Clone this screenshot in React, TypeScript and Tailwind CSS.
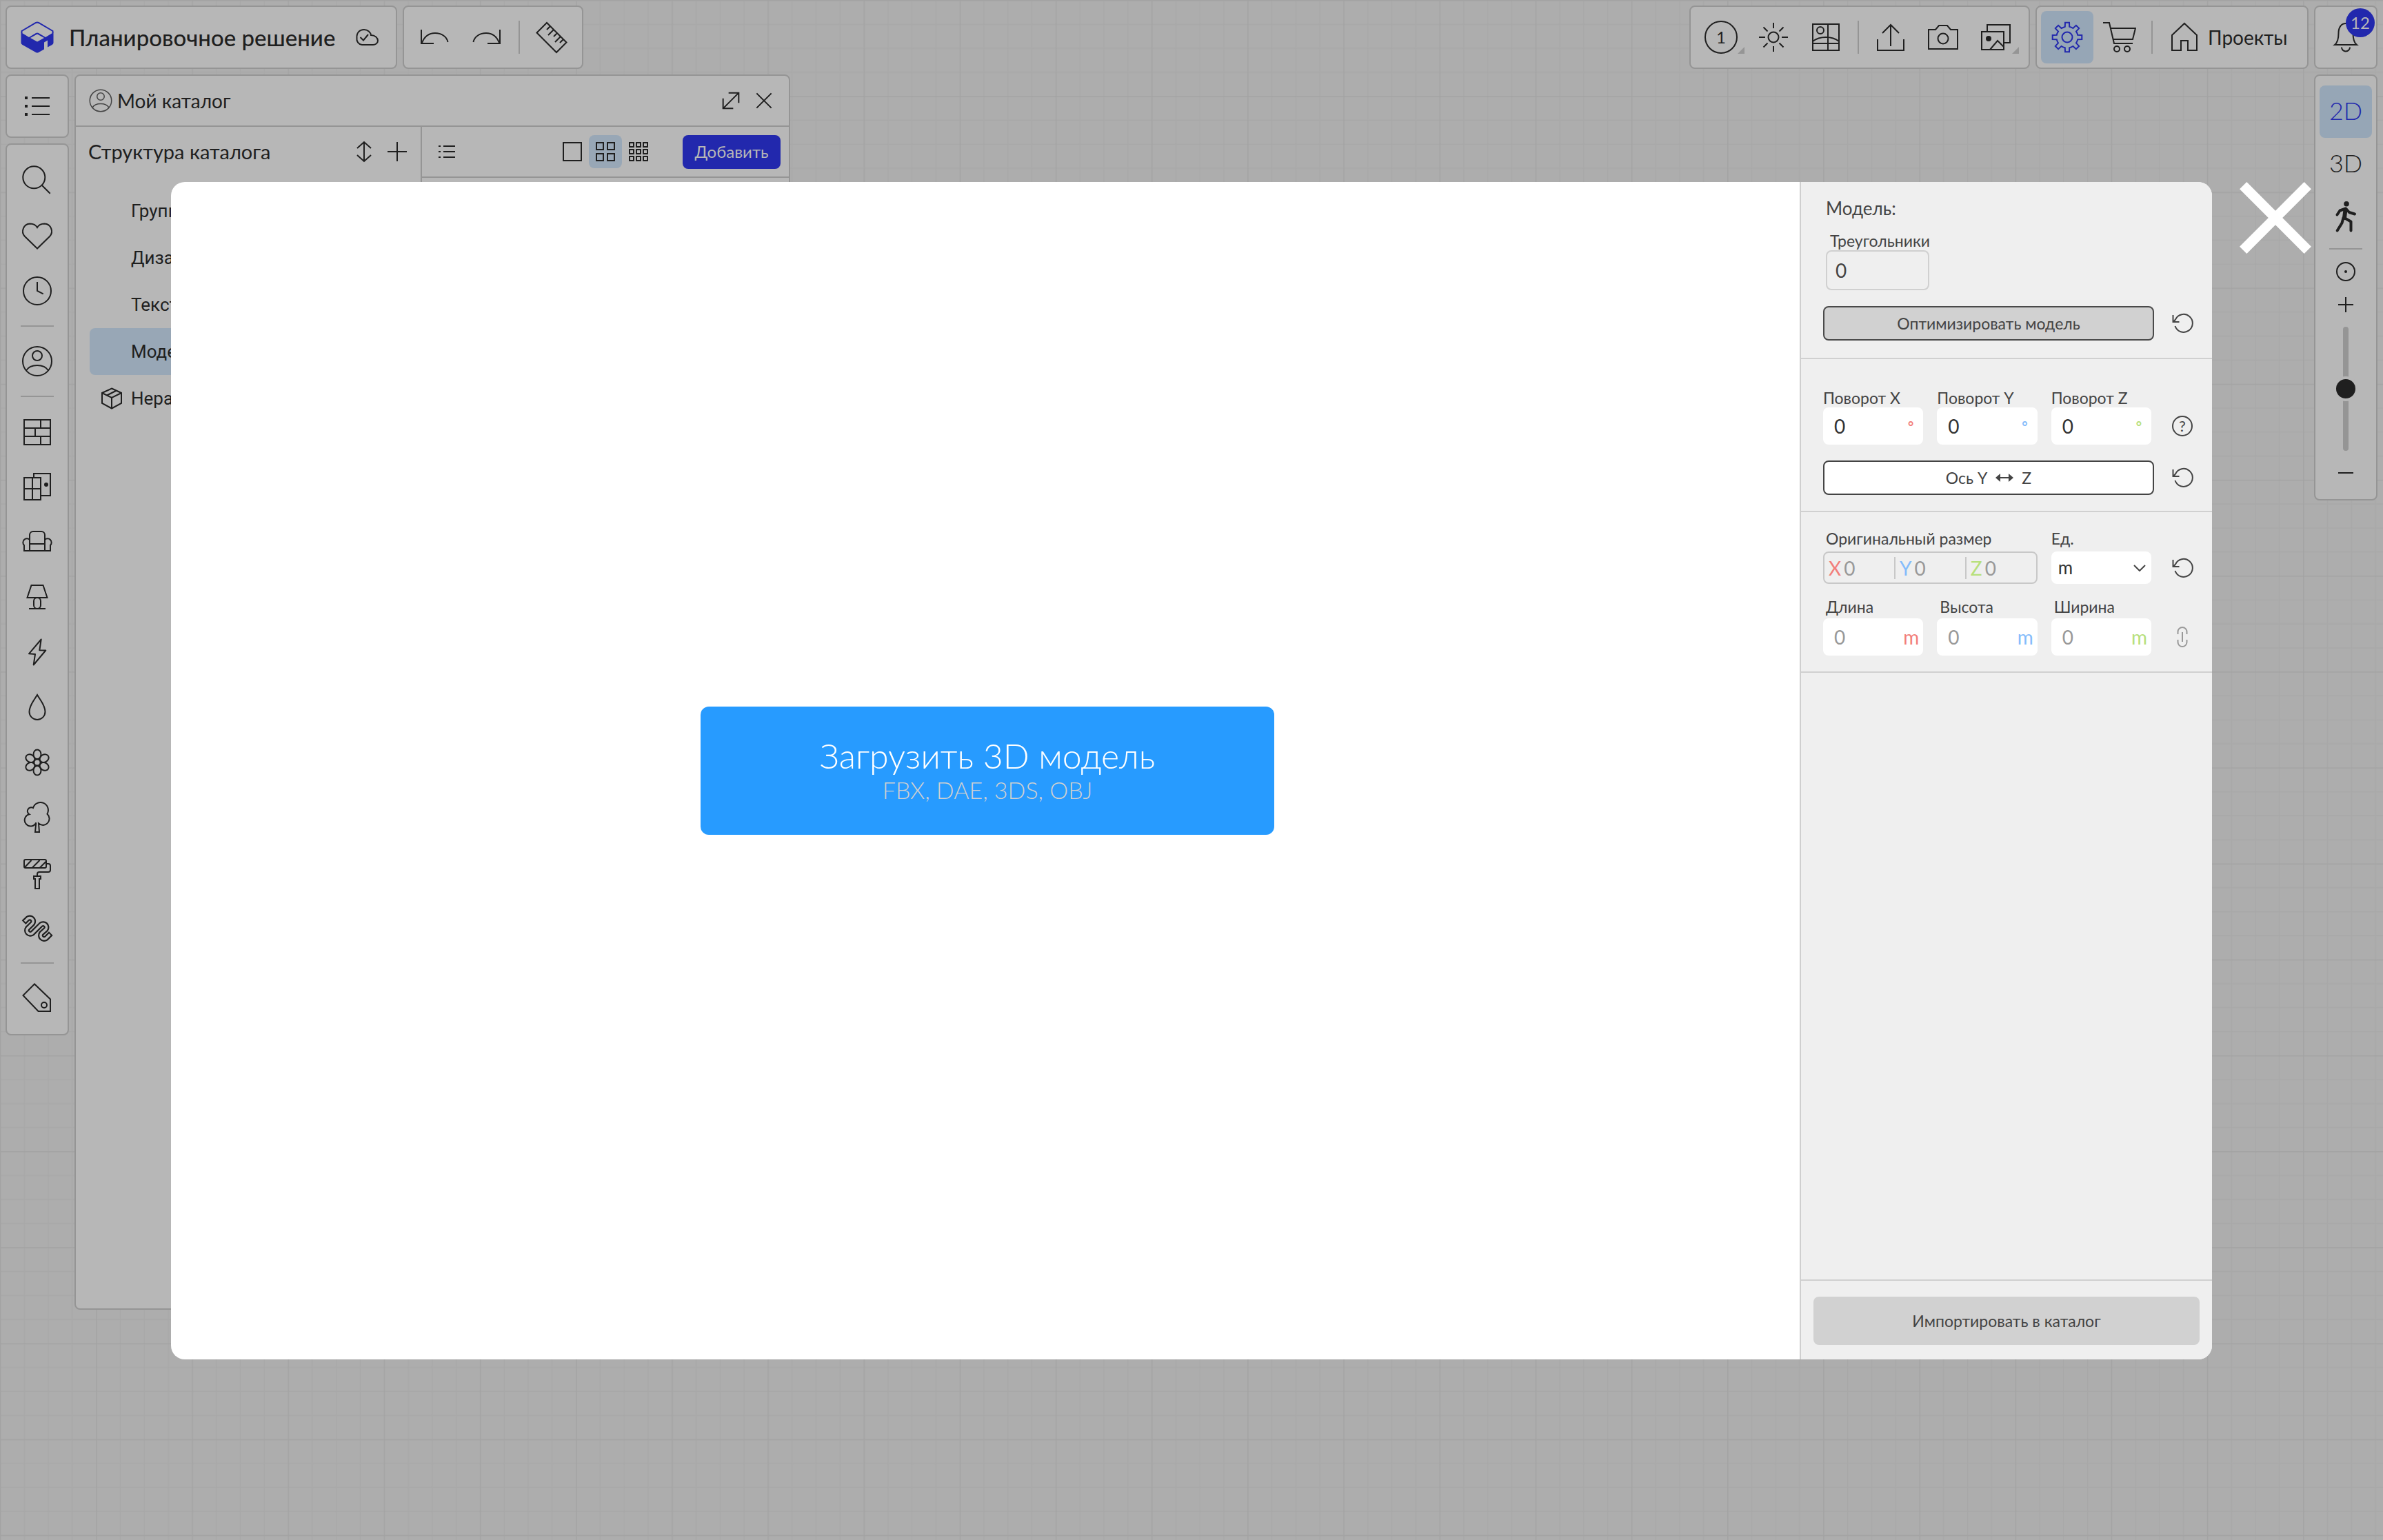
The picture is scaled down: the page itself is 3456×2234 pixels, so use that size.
import type { ReactNode } from 'react';
import clsx from 'clsx';

type IconProps = { children: ReactNode; className?: string };

function Icon({ children, className = 'size-12' }: IconProps) {
  return (
    <svg viewBox="0 0 48 48" fill="none" stroke="currentColor" strokeWidth="2" className={clsx('shrink-0', className)} aria-hidden="true">
      {children}
    </svg>
  );
}

const gearPath =
  Array.from({ length: 8 }, (_, k) => {
    const point = (radius: number, offset: number) => {
      const a = ((k * 45 + offset) * Math.PI) / 180;
      return `${(24 + radius * Math.sin(a)).toFixed(1)} ${(24 - radius * Math.cos(a)).toFixed(1)}`;
    };
    return [point(15.5, -12), point(21.5, -8), point(21.5, 8), point(15.5, 12)].join('L');
  })
    .map((tooth, i) => (i === 0 ? `M${tooth}` : `A15.5 15.5 0 0 1 ${tooth}`))
    .join('') + 'Z';

const userIcon = (
  <>
    <circle cx="24" cy="24" r="21" />
    <circle cx="24" cy="16" r="7" />
    <path d="M8 37.5C11 32.5 17 30 24 30s13 2.500 16 7.500" />
  </>
);

const listIcon = (
  <>
    <path d="M16 12H42M16 24H42M16 36H42" />
    <path d="M6 12H10M6 24H10M6 36H10" strokeWidth="4" />
  </>
);

const hosePath =
  'L10.200 10.500A5 5 0 0 1 17.200 17.500L10 24.700A5 5 0 0 0 17 31.700L29.500 19.200A5 5 0 0 1 36.500 26.200L30 32A5 5 0 0 0 37 39';

type Tool = { label: string; icon: ReactNode };

const toolGroups: Tool[][] = [
  [
    {
      label: 'Поиск',
      icon: (
        <>
          <circle cx="19.300" cy="19.300" r="16" />
          <path d="M31 31L42.700 42.700" />
        </>
      ),
    },
    {
      label: 'Избранное',
      icon: (
        <path d="M24 42.500L6 25A11 11 0 0 1 13.500 6.500C18 6.500 22 8.500 24 12C26 8.500 30 6.500 34.500 6.500A11 11 0 0 1 42 25Z" />
      ),
    },
    {
      label: 'История',
      icon: (
        <>
          <circle cx="24" cy="24" r="20" />
          <path d="M24 11V24L32.700 28.300" />
        </>
      ),
    },
  ],
  [{ label: 'Мой каталог', icon: userIcon }],
  [
    { label: 'Стены', icon: <path d="M5 7H43V43H5ZM5 19H43M5 31H43M29 7V19M21 19V31M29 31V43" /> },
    {
      label: 'Окна и двери',
      icon: (
        <>
          <path d="M5 11H29V43H5ZM17 11V43M5 27H29M19 11V5H43V37H29" />
          <circle cx="37" cy="21" r="3" fill="currentColor" stroke="none" />
        </>
      ),
    },
    {
      label: 'Мебель',
      icon: (
        <path d="M5 37H43M13 37V14a5 5 0 0 1 5-5h12a5 5 0 0 1 5 5v23M13 27H35M5 38V29A5.500 5.500 0 1 1 13 21M43 38V29A5.500 5.500 0 1 0 35 21" />
      ),
    },
    {
      label: 'Освещение',
      icon: (
        <>
          <path d="M15.500 7H32.500L38.500 25H9.500ZM12 41H36" />
          <rect x="19" y="25" width="10" height="16" rx="5" />
        </>
      ),
    },
    {
      label: 'Электрика',
      icon: <path d="M29.700 5.500L12 26.300L21 27L18.700 42.500L36.300 21.500L27.300 21.300Z" strokeLinejoin="round" />,
    },
    {
      label: 'Сантехника',
      icon: <path d="M24 6C20 13 12.500 21 12.500 30.500a11.500 11.500 0 0 0 23 0C35.500 21 28 13 24 6Z" />,
    },
    {
      label: 'Декор',
      icon: (
        <>
          {[0, 60, 120, 180, 240, 300].map((angle) => (
            <ellipse key={angle} cx="24" cy="12.300" rx="5.500" ry="6.800" transform={`rotate(${angle} 24 24)`} />
          ))}
          <circle cx="24" cy="24" r="4.600" />
        </>
      ),
    },
    {
      label: 'Растения',
      icon: (
        <path d="M21 45L22.300 31.500A8.700 8.700 0 1 1 12.500 19.300A5.300 5.300 0 1 1 18 10A11.200 11.200 0 1 1 38.500 18.700A8.800 8.800 0 1 1 26 32.500L27 45Z" />
      ),
    },
    {
      label: 'Отделка',
      icon: (
        <>
          <rect x="5" y="5" width="32" height="12" rx="2" />
          <path d="M6 16L15.500 6M16.500 17L27.500 6M27.500 17L37 7.500M37 11h3a3 3 0 0 1 3 3v6a3 3 0 0 1-3 3H27a3 3 0 0 0-3 3v3M19 29H29V33H27V47H21V33H19Z" />
        </>
      ),
    },
    {
      label: 'Трубы',
      icon: (
        <>
          <path d={`M4.500 16.200${hosePath}L43.800 32.200`} strokeWidth="8" />
          <path d={`M5.900 14.800${hosePath}L42.400 33.600`} strokeWidth="3.600" className="stroke-[#b7b7b7]" />
        </>
      ),
    },
  ],
  [
    {
      label: 'Метки',
      icon: (
        <>
          <path d="M20 3.500L3.500 20L25.500 43H43V25.500Z" />
          <circle cx="34" cy="34" r="4" />
        </>
      ),
    },
  ],
];

const catalogItems = [
  { title: 'Группы' },
  { title: 'Дизайн' },
  { title: 'Текстуры' },
  { title: 'Модели', selected: true },
  { title: 'Неразобранное', box: true },
];

const axes = [
  { axis: 'X', size: 'Длина', color: 'text-[#f27f7b]' },
  { axis: 'Y', size: 'Высота', color: 'text-[#85bcfb]' },
  { axis: 'Z', size: 'Ширина', color: 'text-[#b7e07c]' },
];

function Panel({ children, className }: { children: ReactNode; className?: string }) {
  return <div className={clsx('rounded-lg border-2 border-[#959595] bg-[#b7b7b7]', className)}>{children}</div>;
}

function ToolButton({ label, active, more, children }: { label: string; active?: boolean; more?: boolean; children: ReactNode }) {
  return (
    <button
      type="button"
      aria-label={label}
      className={clsx('relative flex size-[76px] shrink-0 items-center justify-center rounded-lg', active && 'bg-[#96a6b6] text-[#2228ad]')}
    >
      <Icon>{children}</Icon>
      {more && (
        <svg viewBox="0 0 10 10" className="absolute right-1 bottom-3.5 size-2.5 fill-[#959595]" aria-hidden="true">
          <path d="M10 0V10H0Z" />
        </svg>
      )}
    </button>
  );
}

function VerticalDivider() {
  return <span className="mx-2 h-12 w-0.5 bg-[#959595]" />;
}

function ResetButton({ label }: { label: string }) {
  return (
    <button type="button" aria-label={label} className="flex w-8 items-center justify-center">
      <svg viewBox="0 0 32 32" fill="none" stroke="currentColor" strokeWidth="2" className="size-8" aria-hidden="true">
        <path d="M5.500 20A13 13 0 1 0 6 10.500L3 14M2.500 4V14H11.500" />
      </svg>
    </button>
  );
}

function CanvasGrid() {
  return (
    <svg className="absolute inset-0 h-full w-full" aria-hidden="true">
      <defs>
        <pattern id="grid" width="139.170" height="139.170" patternUnits="userSpaceOnUse">
          <path
            d="M35.300 0V139.200M70.100 0V139.200M104.900 0V139.200M0 35.300H139.200M0 70.100H139.200M0 104.900H139.200"
            stroke="#a8a8a8"
            strokeWidth="1.500"
          />
          <path d="M0.700 0V139.200M0 0.700H139.200" stroke="#a3a3a3" strokeWidth="1.500" />
        </pattern>
      </defs>
      <rect width="100%" height="100%" fill="url(#grid)" />
    </svg>
  );
}

function TopBar() {
  return (
    <header className="flex gap-2">
      <Panel className="flex h-[92px] w-[568px] items-center pr-[18px] pl-5">
        <svg viewBox="0 0 48 48" className="size-12 shrink-0" fill="#2228ad" aria-hidden="true">
          <path d="M1.500 18V15L22 3Q24 2 26 3L46.500 15V18" fill="none" stroke="#2228ad" strokeWidth="2" />
          <path d="M.5 17L12 24L22 18Q24 17 26 18L36 24L47.500 17V32Q47.500 34 45.500 35L39 38.500V28.500L34 31.500V41.500L26 46Q24 47 22 46L2.500 35Q.5 34 .5 32Z" />
          <path d="M14 25L24 30.500L34 25L24 19.500Z" fill="#b7b7b7" />
        </svg>
        <h1 className="ml-[22px] text-[33px] leading-10 font-medium whitespace-nowrap">Планировочное решение</h1>
        <button type="button" aria-label="Сохранено" className="ml-auto">
          <Icon>
            <path d="M17 35A8.500 8.500 0 0 1 9.500 25C9 18 13 13 20 13C25.500 13 29.500 17 30 21C36 21 40 25 40 29S36 35 33 35Z" />
            <path d="M14.500 24L19 28.500L26 20" />
          </Icon>
        </button>
      </Panel>
      <Panel className="flex h-[92px] items-center px-1.5">
        <ToolButton label="Отменить">
          <path d="M5 13V33H23M6 32C10 22 17 18 25 18C34 18 42 23 43.500 31" />
        </ToolButton>
        <ToolButton label="Повторить">
          <path d="M43 13V33H25M42 32C38 22 31 18 23 18C14 18 6 23 4.500 31" />
        </ToolButton>
        <VerticalDivider />
        <ToolButton label="Линейка">
          <path d="M17 3L2.500 17.500L31 46L45.500 31.500ZM22 8L17 13M27 13L19 21M32 18L27 23M37 23L29 31M41 27L36 32" />
        </ToolButton>
      </Panel>

      <Panel className="ml-auto flex h-[92px] items-center pr-2.5 pl-1.5">
        <button type="button" className="relative flex size-[76px] items-center justify-center">
          <span className="flex size-12 items-center justify-center rounded-full border-2 border-[#1f1f1f] text-[24px]">1</span>
          <svg viewBox="0 0 10 10" className="absolute right-1 bottom-3.5 size-2.5 fill-[#959595]" aria-hidden="true">
            <path d="M10 0V10H0Z" />
          </svg>
        </button>
        <ToolButton label="Свет">
          <circle cx="24" cy="24" r="7.500" />
          <path d="M24 3V11M24 37V45M3 24H12M36 24H45M9.500 9.500L15.500 15.500M32.500 32.500L38.500 38.500M38.500 9.500L32.500 15.500M15.500 32.500L9.500 38.500" />
        </ToolButton>
        <ToolButton label="Подложка">
          <path d="M5 5H43V43H5ZM27 5V43M5 33H43M5 30C10 26 17 24 24 24S38 26 43 30" />
          <circle cx="16" cy="14" r="5" />
        </ToolButton>
        <VerticalDivider />
        <ToolButton label="Экспорт">
          <path d="M5 27V43H43V27M24 6V37M12 18L24 6L36 18" />
        </ToolButton>
        <ToolButton label="Снимок">
          <path d="M3 13H13L18 7H30L35 13H45V41H3Z" />
          <circle cx="24" cy="26" r="7.500" />
        </ToolButton>
        <ToolButton label="Галерея" more>
          <path d="M4 16H36V42H4ZM12 16V6H45V32H37M16 42L27 29L36 38" />
          <circle cx="14" cy="26" r="4" fill="currentColor" stroke="none" />
        </ToolButton>
      </Panel>
      <Panel className="flex h-[92px] w-[396px] items-center pl-1.5">
        <ToolButton label="Настройки" active>
          <path d={gearPath} />
          <circle cx="24" cy="24" r="7.500" />
        </ToolButton>
        <ToolButton label="Корзина">
          <path d="M0 3H9L16 33H43M11 11H47L43 27H15" />
          <circle cx="20" cy="41" r="4" />
          <circle cx="35" cy="41" r="4" />
        </ToolButton>
        <VerticalDivider />
        <a href="#projects" className="flex h-[76px] items-center gap-2.5 pl-3.5 text-[28px]">
          <Icon>
            <path d="M24 4L42 21V43H29V29H19V43H6V21Z" />
          </Icon>
          Проекты
        </a>
      </Panel>
      <Panel className="relative flex h-[92px] w-[92px] items-center justify-center">
        <ToolButton label="Уведомления">
          <path d="M8 35C12 32 13.500 27 13.500 18C13.500 9 18 4 24 4s10.500 5 10.500 14c0 9 1.500 14 5.500 17ZM18 38.500a6 6 0 0 0 12 0" />
        </ToolButton>
        <span className="absolute top-0.5 right-0.5 flex size-[42px] items-center justify-center rounded-full bg-[#2228ad] text-[24px] text-[#b7b7b7]">
          12
        </span>
      </Panel>
    </header>
  );
}

function LeftTools() {
  return (
    <nav className="flex w-[92px] shrink-0 flex-col gap-2 self-start">
      <Panel className="flex h-[92px] items-center justify-center">
        <button type="button" aria-label="Меню">
          <Icon>{listIcon}</Icon>
        </button>
      </Panel>
      <Panel className="flex flex-col items-center py-3">
        {toolGroups.map((group, index) => (
          <div key={index} className="flex flex-col items-center">
            {index > 0 && <span className="my-2.5 h-0.5 w-12 bg-[#959595]" />}
            {group.map((tool) => (
              <button key={tool.label} type="button" aria-label={tool.label} className="flex h-20 w-20 items-center justify-center">
                <Icon>{tool.icon}</Icon>
              </button>
            ))}
          </div>
        ))}
      </Panel>
    </nav>
  );
}

function Catalog() {
  return (
    <Panel className="flex h-[calc(100vh-442px)] w-[1038px] flex-col">
      <div className="flex h-[74px] shrink-0 items-center border-b-2 border-[#959595] pr-5 pl-[18px]">
        <Icon className="size-9 text-[#444]">{userIcon}</Icon>
        <h2 className="ml-1.5 text-[28px]">Мой каталог</h2>
        <button type="button" aria-label="Развернуть" className="mr-4 ml-auto">
          <Icon className="size-8">
            <path d="M7 41L41 7M19 7H41V29M7 19V41H29" strokeWidth="3" />
          </Icon>
        </button>
        <button type="button" aria-label="Закрыть каталог">
          <Icon className="size-8">
            <path d="M8 8L40 40M40 8L8 40" strokeWidth="3" />
          </Icon>
        </button>
      </div>
      <div className="flex min-h-0 flex-1">
        <div className="w-[502px] shrink-0 border-r-2 border-[#959595]">
          <div className="flex h-[72px] items-center pr-[18px] pl-[18px]">
            <h3 className="text-[29px]">Структура каталога</h3>
            <button type="button" aria-label="Сортировать" className="mr-4 ml-auto">
              <svg viewBox="0 0 32 32" fill="none" stroke="currentColor" strokeWidth="2" className="size-8" aria-hidden="true">
                <path d="M16 2V30M6 11L16 2L26 11M6 21L16 30L26 21" />
              </svg>
            </button>
            <button type="button" aria-label="Добавить группу">
              <svg viewBox="0 0 32 32" fill="none" stroke="currentColor" strokeWidth="2" className="size-8" aria-hidden="true">
                <path d="M16 2V30M2 16H30" />
              </svg>
            </button>
          </div>
          <ul className="mt-4 pr-5 pl-5 [font-family:Roboto,sans-serif]">
            {catalogItems.map((item) => (
              <li key={item.title}>
                <button
                  type="button"
                  className={clsx('flex h-[68px] w-full items-center rounded-lg pl-4 text-[26px]', item.selected && 'bg-[#98a7b6]')}
                >
                  <span className="mr-3 size-8">
                    {item.box && (
                      <svg viewBox="0 0 32 32" fill="none" stroke="currentColor" strokeWidth="2" className="size-8" aria-hidden="true">
                        <path d="M16 1.500L30 8V23L16 30.500L2 23V8ZM2 8L16 15L30 8M16 15V30M9 11.500L22 5" />
                      </svg>
                    )}
                  </span>
                  {item.title}
                </button>
              </li>
            ))}
          </ul>
        </div>
        <div className="flex-1">
          <div className="flex h-[74px] items-center border-b-2 border-[#959595] pr-3 pl-5">
            <button type="button" aria-label="Список">
              <svg viewBox="0 0 32 32" fill="none" stroke="currentColor" strokeWidth="2" className="size-8" aria-hidden="true">
                <path d="M11 8H28M11 16H28M11 24H28M4 8H7M4 16H7M4 24H7" />
              </svg>
            </button>
            <button type="button" aria-label="Крупные карточки" className="ml-auto flex size-12 items-center justify-center">
              <svg viewBox="0 0 28 28" fill="none" stroke="currentColor" strokeWidth="2" className="size-7" aria-hidden="true">
                <path d="M1 1H27V27H1Z" />
              </svg>
            </button>
            <button type="button" aria-label="Средние карточки" className="flex size-12 items-center justify-center rounded-lg bg-[#98a7b6]">
              <svg viewBox="0 0 28 28" fill="none" stroke="currentColor" strokeWidth="2" className="size-7" aria-hidden="true">
                <path d="M1 1H11V11H1ZM17 1H27V11H17ZM1 17H11V27H1ZM17 17H27V27H17Z" />
              </svg>
            </button>
            <button type="button" aria-label="Мелкие карточки" className="flex size-12 items-center justify-center">
              <svg viewBox="0 0 28 28" fill="none" stroke="currentColor" strokeWidth="2" className="size-7" aria-hidden="true">
                {[1, 11, 21].map((y) => [1, 11, 21].map((x) => <rect key={`${x}-${y}`} x={x} y={y} width="6" height="6" />))}
              </svg>
            </button>
            <button type="button" className="ml-10 h-[49px] w-[142px] rounded-lg bg-[#2228ad] text-[24px] text-[#b7b7b7]">
              Добавить
            </button>
          </div>
        </div>
      </div>
    </Panel>
  );
}

function ViewTools() {
  return (
    <Panel className="ml-auto flex w-[92px] flex-col items-center self-start py-3.5">
      <button type="button" className="size-[76px] rounded-lg bg-[#96a6b6] pb-1 text-[36px] font-light text-[#2228ad]">
        2D
      </button>
      <button type="button" className="size-[76px] pb-1 text-[36px] font-light">
        3D
      </button>
      <ToolButton label="Прогулка">
        <g strokeLinecap="round" strokeLinejoin="round" strokeWidth="4">
          <circle cx="25" cy="5.700" r="3.800" fill="currentColor" stroke="none" />
          <path d="M11.500 21.500L15.500 15.500L24 12.500L29 18L37 20.500M20.500 26L18.500 33.500L11.700 44.500M22 26L31.500 31.500V44.500" />
          <path d="M23.500 14L22 26" strokeWidth="6" />
        </g>
      </ToolButton>
      <span className="mt-2 h-0.5 w-12 bg-[#959595]" />
      <button type="button" aria-label="По центру" className="mt-2">
        <Icon>
          <circle cx="24" cy="24" r="13" />
          <circle cx="24" cy="24" r="2" fill="currentColor" stroke="none" />
        </Icon>
      </button>
      <button type="button" aria-label="Приблизить">
        <Icon>
          <path d="M13 24H35M24 13V35" />
        </Icon>
      </button>
      <input
        type="range"
        aria-label="Масштаб"
        defaultValue={50}
        className="mt-2 h-[180px] w-2 appearance-none rounded-full bg-[#959595] [writing-mode:vertical-lr] [&::-webkit-slider-thumb]:size-9 [&::-webkit-slider-thumb]:appearance-none [&::-webkit-slider-thumb]:rounded-full [&::-webkit-slider-thumb]:border-4 [&::-webkit-slider-thumb]:border-[#b7b7b7] [&::-webkit-slider-thumb]:bg-[#1f1f1f]"
      />
      <button type="button" aria-label="Отдалить" className="mt-2">
        <Icon>
          <path d="M13 24H35" />
        </Icon>
      </button>
    </Panel>
  );
}

function ModelSettings() {
  return (
    <aside className="flex w-[598px] shrink-0 flex-col border-l-2 border-[#cfcfcf] bg-[#efefef] text-[#444]">
      <section className="border-b-2 border-[#d0d0d0] pt-[22px] pr-[27px] pb-[25px] pl-8">
        <h2 className="ml-1 text-[26px] leading-8">Модель:</h2>
        <label htmlFor="triangles" className="mt-[17px] ml-2.5 block text-[23px] leading-7">
          Треугольники
        </label>
        <input
          id="triangles"
          readOnly
          defaultValue="0"
          className="ml-1 block h-[58px] w-[150px] rounded-lg border-2 border-[#d0d0d0] bg-transparent px-3 text-[28px]"
        />
        <div className="mt-[23px] flex gap-[25px]">
          <button type="button" className="h-[50px] flex-1 rounded-lg border-2 border-[#4a4a4a] bg-[#d1d1d1] text-[23px]">
            Оптимизировать модель
          </button>
          <ResetButton label="Сбросить модель" />
        </div>
      </section>

      <section className="border-b-2 border-[#d0d0d0] pt-[42px] pr-[27px] pb-[23px] pl-8">
        <div className="flex items-end gap-[25px]">
          <div className="grid flex-1 grid-cols-3 gap-5 pr-1">
            {axes.map(({ axis, color }) => (
              <div key={axis}>
                <label htmlFor={`rotation-${axis}`} className="block text-[23px] leading-7 whitespace-nowrap">
                  Поворот {axis}
                </label>
                <div className="flex h-[54px] items-center rounded-lg bg-white pr-3.5 pl-4">
                  <input id={`rotation-${axis}`} defaultValue="0" className="w-0 flex-1 text-[28px] text-[#333]" />
                  <span className={clsx('text-[20px] font-bold', color)}>°</span>
                </div>
              </div>
            ))}
          </div>
          <button type="button" aria-label="Справка" className="flex h-[54px] w-8 items-center justify-center">
            <span className="flex size-[30px] items-center justify-center rounded-full border-2 border-[#444] text-[22px] leading-6">?</span>
          </button>
        </div>
        <div className="mt-[23px] flex gap-[25px]">
          <button type="button" className="flex h-[50px] flex-1 items-center justify-center gap-3 rounded-lg border-2 border-[#444] bg-white text-[23px]">
            Ось Y
            <svg viewBox="0 0 26 12" className="h-3 w-[26px]" fill="currentColor" aria-hidden="true">
              <path d="M0 6L7 0V5H19V0L26 6L19 12V7H7V12Z" />
            </svg>
            Z
          </button>
          <ResetButton label="Сбросить поворот" />
        </div>
      </section>

      <section className="border-b-2 border-[#d0d0d0] pt-6 pr-[27px] pb-[23px] pl-8">
        <div className="flex items-end gap-[25px]">
          <div className="grid flex-1 grid-cols-3 gap-5 pr-1">
            <div className="col-span-2">
              <h3 className="ml-1 text-[23px] leading-7">Оригинальный размер</h3>
              <div className="mt-[5px] flex h-[47px] items-center rounded-lg border-2 border-[#c8c8c8]">
                {axes.map(({ axis, color }, index) => (
                  <span key={axis} className={clsx('flex h-8 flex-1 items-center gap-1 pl-1.5 text-[28px] text-[#999]', index > 0 && 'border-l-2 border-[#c8c8c8]')}>
                    <span className={color}>{axis}</span>0
                  </span>
                ))}
              </div>
            </div>
            <div>
              <label htmlFor="unit" className="block text-[23px] leading-7">
                Ед.
              </label>
              <div className="relative mt-[5px]">
                <select id="unit" className="block h-[47px] w-full appearance-none rounded-lg bg-white px-2.5 text-[26px] text-[#333]">
                  <option>m</option>
                </select>
                <svg viewBox="0 0 18 10" fill="none" stroke="currentColor" strokeWidth="2" className="pointer-events-none absolute top-[19px] right-2 h-2.5 w-[18px]" aria-hidden="true">
                  <path d="M1 1L9 9L17 1" />
                </svg>
              </div>
            </div>
          </div>
          <div className="flex h-[47px]">
            <ResetButton label="Сбросить размер" />
          </div>
        </div>
        <div className="mt-[19px] flex items-end gap-[25px]">
          <div className="grid flex-1 grid-cols-3 gap-5 pr-1">
            {axes.map(({ axis, size, color }) => (
              <div key={axis}>
                <label htmlFor={`size-${axis}`} className="ml-1 block text-[23px] leading-7">
                  {size}
                </label>
                <div className="mt-[3px] flex h-[54px] items-center rounded-lg bg-white pr-1.5 pl-4">
                  <input id={`size-${axis}`} defaultValue="0" className="w-0 flex-1 text-[28px] text-[#999]" />
                  <span className={clsx('text-[28px]', color)}>m</span>
                </div>
              </div>
            ))}
          </div>
          <button type="button" aria-label="Связать размеры" className="flex h-[54px] w-8 items-center justify-center text-[#999]">
            <svg viewBox="0 0 16 30" fill="none" stroke="currentColor" strokeWidth="2" className="h-[30px] w-4" aria-hidden="true">
              <path d="M1.500 11V7.500a6.500 6.500 0 0 1 13 0V11M1.500 19v3.500a6.500 6.500 0 0 0 13 0V19M8 8v14" />
            </svg>
          </button>
        </div>
      </section>

      <footer className="mt-auto border-t-2 border-[#d0d0d0] px-[18px] pt-[23px] pb-[21px]">
        <button type="button" className="h-[70px] w-full rounded-lg bg-[#d1d1d1] text-[23px]">
          Импортировать в каталог
        </button>
      </footer>
    </aside>
  );
}

function ImportDialog() {
  return (
    <div className="absolute inset-0 px-[248px] pt-[264px] pb-[262px]">
      <div role="dialog" aria-label="Загрузка 3D модели" className="flex h-full overflow-hidden rounded-[20px] bg-white">
        <div className="flex flex-1 items-center justify-center pl-1.5">
          <button type="button" className="flex h-[186px] w-[832px] flex-col items-center justify-center rounded-xl bg-[#279bff] pb-1 font-light">
            <span className="text-[50px] leading-[60px] text-white">Загрузить 3D модель</span>
            <span className="text-[34px] leading-10 text-[#d0d0d0]">FBX, DAE, 3DS, OBJ</span>
          </button>
        </div>
        <ModelSettings />
      </div>
      <button type="button" aria-label="Закрыть" className="absolute top-[264px] right-[104px]">
        <svg viewBox="0 0 104 104" className="size-[104px]" stroke="white" strokeWidth="14.600" aria-hidden="true">
          <path d="M5.200 5.200L98.800 98.800M98.800 5.200L5.200 98.800" />
        </svg>
      </button>
    </div>
  );
}

export default function App() {
  return (
    <div className="relative h-screen overflow-hidden bg-[#adadad] text-[#1f1f1f] [font-family:Lato,'Noto_Sans',sans-serif]">
      <CanvasGrid />
      <div className="relative flex flex-col gap-2 p-2">
        <TopBar />
        <main className="flex gap-2">
          <LeftTools />
          <Catalog />
          <ViewTools />
        </main>
      </div>
      <ImportDialog />
    </div>
  );
}
